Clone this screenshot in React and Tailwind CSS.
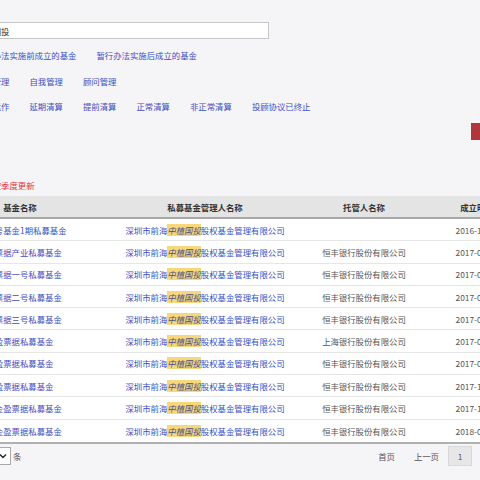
import React from "react";

// 私募基金列表页 (截取视图)
const rows = [
  { name: "中植3号基金1期私募基金", bank: "", date: "2016-12-29" },
  { name: "中植票据产业私募基金", bank: "恒丰银行股份有限公司", date: "2017-02-16" },
  { name: "中植票据一号私募基金", bank: "恒丰银行股份有限公司", date: "2017-03-08" },
  { name: "中植票据二号私募基金", bank: "恒丰银行股份有限公司", date: "2017-03-08" },
  { name: "中植票据三号私募基金", bank: "恒丰银行股份有限公司", date: "2017-03-08" },
  { name: "信盈票据私募基金", bank: "上海银行股份有限公司", date: "2017-06-21" },
  { name: "鑫盈票据私募基金", bank: "恒丰银行股份有限公司", date: "2017-09-12" },
  { name: "金盈票据私募基金", bank: "恒丰银行股份有限公司", date: "2017-11-03" },
  { name: "中植金盈票据私募基金", bank: "恒丰银行股份有限公司", date: "2017-12-15" },
  { name: "中植金盈票据私募基金", bank: "恒丰银行股份有限公司", date: "2018-01-19" },
];

const linkRows = [
  ["暂行办法实施前成立的基金", "暂行办法实施后成立的基金"],
  ["受托管理", "自我管理", "顾问管理"],
  ["正在运作", "延期清算", "提前清算", "正常清算", "非正常清算", "投顾协议已终止"],
];

const font = { fontFamily: '"Noto Sans CJK SC", "Noto Sans", sans-serif' };

export default function App() {
  return (
    <div
      className="w-[480px] h-[480px] overflow-hidden bg-[#f5f4f6] text-[8.4px] leading-[12px]"
      style={font}
    >
      <div className="ml-[-24px] w-[620px] pt-[22px]">
        {/* Search */}
        <div className="ml-[-6px] w-[299px] h-[17px] bg-white border border-[#c6c6c6] pl-[5px] flex items-center text-[#333]">
          中植国投
        </div>

        {/* Filter links */}
        {linkRows.map((items, i) => (
          <div
            key={i}
            className={`flex gap-[20px] text-[#3c4fbf] ${
              i === 0 ? "mt-[10px]" : i === 1 ? "mt-[14px]" : "mt-[13px]"
            }`}
          >
            {items.map((t) => (
              <span key={t} className="whitespace-nowrap">
                {t}
              </span>
            ))}
          </div>
        ))}

        {/* Query button */}
        <div className="mt-[11px] h-[17px] flex">
          <div className="ml-[495px] w-[60px] h-[17px] bg-[#b0363b]" />
        </div>

        {/* Note */}
        <div className="mt-[39px] text-[#e0333b]">数据按季度更新</div>

        {/* Table */}
        <div className="mt-[5px] ml-[-36px]">
          <div className="grid grid-cols-[160px_210px_108px_118px] h-[21px] items-center bg-[#e4e4e4] border-b-2 border-[#a8a8a8] font-bold text-[#333] text-center box-content">
            <div>基金名称</div>
            <div>私募基金管理人名称</div>
            <div>托管人名称</div>
            <div>成立时间</div>
          </div>
          <div className="border-b-2 border-[#b0b0b0]">
            {rows.map((r, i) => (
              <div
                key={i}
                className={`grid grid-cols-[160px_210px_108px_118px] h-[22.3px] items-center bg-white text-center ${
                  i < rows.length - 1 ? "border-b border-[#e6e6e6]" : ""
                }`}
              >
                <div className="text-[#3c4fbf] whitespace-nowrap">{r.name}</div>
                <div className="text-[#3c4fbf] whitespace-nowrap">
                  深圳市前海
                  <span className="italic bg-[#f6d77c] text-[#4a4f8a]">中植国投</span>
                  股权基金管理有限公司
                </div>
                <div className="text-[#555] whitespace-nowrap">{r.bank}</div>
                <div className="text-[#555] whitespace-nowrap">{r.date}</div>
              </div>
            ))}
          </div>
        </div>
      </div>

      {/* Pagination */}
      <div className="mt-[2px] h-[20px] flex items-center pr-[8px]">
        <div className="ml-[-19px] w-[30px] h-[18px] bg-white border border-[#a9a9a9] flex items-center justify-end pr-[3px]">
          <svg width="8" height="6" viewBox="0 0 8 6">
            <path d="M1 1.5 L4 4.5 L7 1.5" fill="none" stroke="#222" strokeWidth="1.4" />
          </svg>
        </div>
        <span className="ml-[2px] text-[#555]">条</span>
        <div className="ml-auto flex items-center text-[#555]">
          <span>首页</span>
          <span className="ml-[19px]">上一页</span>
          <span className="ml-[9px] w-[24px] h-[20px] flex items-center justify-center bg-[#e6e6e6] border border-[#d8d8d8]">
            1
          </span>
        </div>
      </div>
    </div>
  );
}
